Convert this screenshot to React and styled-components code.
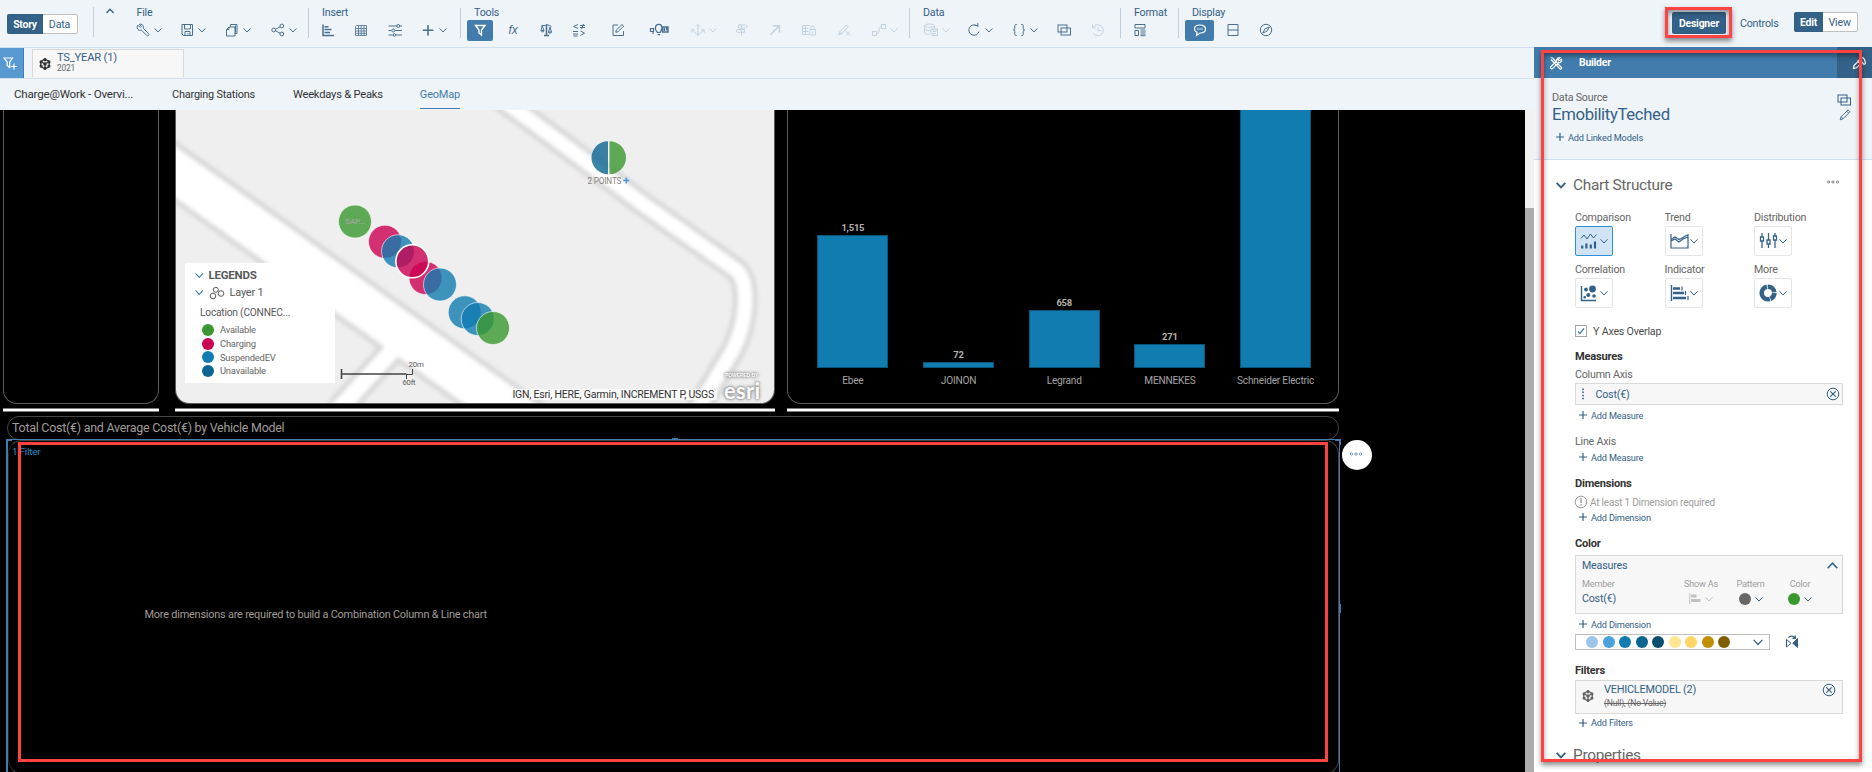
import React from "react";
import styled, { createGlobalStyle, css } from "styled-components";

const GlobalStyle = createGlobalStyle`
  * { box-sizing: border-box; letter-spacing: -0.02em; }
  body {
    margin: 0;
    background: #eff4f9;
    font-family: Roboto, "Liberation Sans", sans-serif;
    overflow: hidden;
  }
`;

const c = {
  ink: "#346187",
  blue: "#427cac",
  pale: "#eff4f9",
  line: "#d1dfee",
  grey: "#666666",
  red: "#ff4343",
  bar: "#117cb0",
};

/* ---------- page frame ---------- */
const Page = styled.div`
  position: relative;
  width: 1872px;
  height: 772px;
  display: flex;
  flex-direction: column;
  overflow: hidden;
  background: ${c.pale};
  white-space: nowrap;
`;
const Body = styled.div`
  flex: 1;
  min-height: 0;
  display: flex;
`;
const Main = styled.div`
  width: 1534px;
  display: flex;
  flex-direction: column;
  border-top: 1px solid ${c.line};
`;

/* ---------- icons ---------- */
const Svg = styled.svg`
  display: block;
  flex: none;
  fill: none;
  stroke: currentColor;
  stroke-width: 1;
  overflow: visible;
`;
const shapes = {
  wrench: <><path d="M3 3.2 5.2 5.4 6.4 4.2 4.3 2.3a3 3 0 0 1 3.9 3.9l5.3 5.4a1.2 1.2 0 0 1-1.8 1.8L6.3 8.1A3 3 0 0 1 3 3.2Z" /></>,
  save: <><path d="M3 2.5h10.5v11H4.5L3 12Z" /><path d="M5.5 2.5v4.5h6V2.5M6 13.5v-4h5v4M9 11v1.5" /></>,
  copy: <><path d="M6.500 4.500v-2h6.500v9h-2M11.500 3.500v7" /><path d="M5 5h6v9H2.500V7.500ZM5 5v2.500H2.500" /></>,
  share: <><circle cx="3.7" cy="8" r="1.9" /><circle cx="11.8" cy="4" r="1.9" /><circle cx="11.8" cy="12" r="1.9" /><path d="M5.6 7.2 10 4.8M5.6 8.8 10 11.2" /></>,
  chart: <path d="M3 2.5v11h11M4.5 4.8h4M4.5 7.6h7M4.5 10.4h5.5" strokeWidth="1.5" />,
  table: <><path d="M3.5 3.5h10v10h-11V4.5ZM2.5 6.5h11M2.5 9h11M2.5 11.3h11M5.5 3.5v10M8.2 3.5v10M11 3.5v10" strokeWidth=".8" /></>,
  sliders: <><path d="M1.5 4h8M13 4h2M1.5 8.5h3M8 8.5h7M1.5 13h4M9 13h6" /><circle cx="11.2" cy="4" r="1.5" /><circle cx="6.3" cy="8.5" r="1.5" /><circle cx="7.3" cy="13" r="1.3" /></>,
  plus: <path d="M8 3v10.5M2.8 8.2h10.5" strokeWidth="1.6" />,
  funnel: <path d="M3.5 3.5h9.5L9.5 8v5L7 11V8Z" strokeWidth="1.4" />,
  funnelAdd: <><path d="M2 3h8.5L7.700 7v5.500L5.200 10.500V7Z" strokeWidth="1.200" /><path d="M12 8.500v6M9 11.500h6" strokeWidth="1.200" /></>,
  scale: <><path d="M8.500 2.500v11M6 13.500h5" strokeWidth="1.500" /><path d="M3.500 3.500h4L9 2.500l4.500 2M3 8.500 4.200 4 6 8.500ZM10.500 10 12 5l1.500 5ZM2.800 8.800c.5 1.500 3 1.500 3.500 0M10.200 10.200c.5 1.300 3 1.300 3.500 0" /></>,
  compare: <path d="M7 2.500 2.500 4.500 7 6.500M9 3.500h5M9 5.500h5M12.500 2l-2 5M2 9.500h5M2 12h5M2.500 14h4M9.500 9l4 2.200-4 2.200" />,
  edit: <><path d="M8 3H3v10.500h10.500V9" /><path d="M6.300 8 12 2.500l1.700 1.600L8 9.800 5.800 10.300Z" /></>,
  bulb: <><path d="M-.5 6.500h3v3h-3ZM2 9.500v2.500M6.500 10.500C4.500 8.500 4 7 4.500 5a3.300 3.300 0 0 1 6.500.5c0 2-1.300 3-1.800 5ZM6.600 12.700h2.600" strokeWidth="1.200" /><path d="M11.500 5h5.500v5h-5.500ZM13.300 6v3M15.500 5.500v3" strokeWidth="1.400" /></>,
  branch: <path d="M8 13.500V2.500M6 4.500l2-2 2 2M8 13.500 2 8M1.800 10.800V7.800h3M8 13.500 14 8M14.200 10.800V7.800h-3" />,
  sign: <path d="M7.500 14V2M4.500 3h7l2 1.500-2 1.500h-7ZM10.500 7.500h-7L2 9l1.500 1.300h7Z" />,
  arrow: <path d="M3.500 12.500 12 4M5.500 3.700h7v7" strokeWidth="1.600" />,
  lockTable: <><path d="M8 12.500H1.500v-9h8M1.500 6.500h6M1.500 9.500h6M4.500 3.500v9" /><path d="M9 7.500h5.500v5.500H9ZM10 7.500V5.500a1.800 1.800 0 0 1 3.500 0v2M11.700 9.500v2" /></>,
  clearEdit: <><path d="M2.500 13 4 9.500 10.500 3l1.800 1.600L6 11.500ZM3.500 10l2 1.500" /><path d="M10 9.500l4 4M14 9.500l-4 4" /></>,
  link: <><rect x="1.500" y="9.500" width="4" height="4" /><rect x="10.500" y="2.500" width="4" height="4" /><path d="M5.500 11.500C8 11.500 8 10 8 8s0-3.500 2.500-3.500" /></>,
  database: <><ellipse cx="6.500" cy="3.700" rx="5" ry="1.700" /><path d="M1.500 3.700v7c0 1 2 1.800 4.500 1.800M1.500 7c1 1.500 4 1.700 6 1.500M11.500 3.700v2.500" /><path d="M8 7h6.500v6.500H9L8 12.500ZM10 7v2.500h3V7M10 13.500v-2h3" /></>,
  refresh: <path d="M11 3.800A5.200 5.200 0 1 0 13 9.500M8.500 3.500h3.300V1M11.800 3.500v1.500" />,
  braces: <path d="M5.800 2.500H5c-1 0-1.200.5-1.200 1.200v2.600C3.800 7.500 3.300 8 2.300 8c1 0 1.500.5 1.500 1.700v2.600c0 .7.2 1.200 1.200 1.200h.8M10.200 2.500h.8c1 0 1.200.5 1.200 1.200v2.600c0 1.200.5 1.700 1.500 1.700-1 0-1.500.5-1.500 1.700v2.600c0 .7-.2 1.200-1.200 1.200h-.8" />,
  linked: <><rect x="2" y="3" width="9" height="7" /><rect x="5" y="6" width="9.500" height="7" /></>,
  history: <><path d="M3 5.500A5.500 5.500 0 1 1 3 11M2.500 2.500v3.300h3.300M8 5v3.500h3" /></>,
  format: <path d="M3 2.500h10v3.500H3ZM3 8.500h3.500v5H3ZM8.500 8h5M8.500 10h5M8.500 12h5M8.500 13.700h5" />,
  comment: <><path d="M8 3C4.500 3 2.500 4.800 2.500 7c0 1.600 1 2.800 2.500 3.400L4.500 13.500 8 11c3.500 0 5.500-1.800 5.500-4S11.500 3 8 3Z" strokeWidth="1.200" /><path d="M5.300 7h1M7.500 7h1M9.700 7h1" strokeWidth="1.600" /></>,
  rows: <path d="M3 2.500h10v11H3ZM3 8h10" />,
  compass: <><circle cx="8" cy="8" r="5.700" /><path d="M4.800 11 7 6.800 11.300 5 9 9.200Z" /></>,
  tools: <><path d="m4.500 3 9 9.500c.6 1-.6 2-1.500 1.300L3 4.500M2.500 2.500 5 3M12 2.500l-2 2 1 1.300 2.500-1.500c.6 2-1 4-3 3.300l-6 6c-1 .7-2.500-.7-1.800-1.700l6-6c-.5-1.900 1.200-3.500 3.300-3.400Z" strokeWidth="1.200" /></>,
  brush: <path d="m1.500 13.500.5-3L6 6.500l2.500 2.300-4 4ZM5.500 5.500l4.500 4.500M6.500 5.500 9 3c2-1.500 4 1 4.500 5.500L12 9.500 9.500 6.500" strokeWidth="1.200" />,
  pencil: <path d="M2.500 13.500 3.500 10 11.500 2.300l2.200 2L5.800 12.300ZM10 3.800l2.200 2M3.600 10l2.200 2.300" />,
  cube: <><path d="M8 3 12.300 5.500v5L8 13 3.700 10.500v-5ZM8 8v5M8 8l4.300-2.500M8 8 3.700 5.500" strokeWidth="1.100" /><g fill="currentColor" stroke="none"><circle cx="8" cy="3.700" r="1.700" /><circle cx="11.900" cy="5.900" r="1.600" /><circle cx="11.900" cy="10.100" r="1.600" /><circle cx="8" cy="12.300" r="1.700" /><circle cx="4.100" cy="10.100" r="1.600" /><circle cx="4.100" cy="5.900" r="1.600" /><circle cx="8" cy="8" r="1.800" /></g></>,
  close: <><circle cx="8" cy="8" r="5.800" /><path d="m5.300 5.300 5.400 5.400M10.700 5.300l-5.400 5.400" strokeWidth="1.200" /></>,
  alert: <><circle cx="8" cy="8" r="5.800" /><path d="M8 4.300v4.700M8 10.300v1.500" strokeWidth="1.400" /></>,
  dots: <><circle cx="2" cy="8" r="1.500" /><circle cx="8" cy="8" r="1.500" /><circle cx="14" cy="8" r="1.500" /></>,
  flip: <><path d="M2.500 5.500v7.500L7 9.300Z" /><path d="M13.500 4.500v9L8.800 9.300Z" fill="currentColor" /><path d="M4.500 3.500c2-2 5-2 6.500.5M11.300 1.500V4.300H8.500" strokeWidth="1.200" /></>,
  nodes: <><circle cx="4" cy="11" r="2.800" /><circle cx="6.800" cy="4.800" r="2.500" /><circle cx="12" cy="8.500" r="2.800" /></>,
};
const Icon = ({ name, size = 16 }) => (
  <Svg width={size} height={size} viewBox="0 0 16 16">{shapes[name]}</Svg>
);
const Chevron = ({ up, size = 8, weight = 1 }) => (
  <Svg width={size} height={size} viewBox="0 0 8 8" style={{ strokeWidth: weight }}>
    <path d={up ? "M.5 6 4 2.300 7.500 6" : "M.5 2.300 4 6l3.500-3.700"} />
  </Svg>
);

/* ---------- toolbar ---------- */
const Toolbar = styled.header`
  height: 47px;
  flex: none;
  display: flex;
  color: ${c.ink};
  font-size: 10.7px;
`;
const Switch = styled.div`
  display: flex;
  width: ${(p) => p.$w}px;
  height: 20px;
  margin: ${(p) => p.$m};
  background: #fff;
  border: 1px solid #bfbfbf;
  border-radius: 2px;
`;
const SwitchItem = styled.div`
  display: grid;
  place-items: center;
  margin: -1px 0 -1px -1px;
  width: ${(p) => p.$w}px;
  border-radius: 2px 0 0 2px;
  ${(p) => p.$on && css`
    background: ${c.ink};
    color: #fff;
    font-weight: 700;
    font-size: 10.4px;
  `}
`;
const Divider = styled.div`
  width: 1px;
  height: 30px;
  margin-top: ${(p) => p.$top || 8}px;
  background: #c5ced8;
`;
const Collapse = styled.div`
  width: 32px;
  padding: 7px 0 0 12px;
`;
const Group = styled.div`
  width: ${(p) => p.$w}px;
  padding: 6px 0 0 ${(p) => p.$pl}px;
`;
const GroupLabel = styled.div`
  height: 14px;
  line-height: 13px;
  padding-left: ${(p) => p.$indent}px;
`;
const ToolRow = styled.div`
  display: flex;
  align-items: center;
  height: 21px;
`;
const Tool = styled.div`
  display: flex;
  align-items: center;
  gap: 3px;
  margin: 0 0 2px ${(p) => p.$gap}px;
  color: ${(p) => (p.$off ? "#c3d2df" : "#4a6f90")};
`;
const ToolButton = styled.div`
  width: ${(p) => p.$w}px;
  height: 21px;
  padding-bottom: 1px;
  display: grid;
  place-items: center;
  border-radius: 2px;
  background: ${c.blue};
  color: #fff;
`;
const Formula = styled.span`
  width: 16px;
  text-align: center;
  font: italic 12px "Liberation Sans", sans-serif;
`;
const groups = [
  { label: "File", w: 182, pl: 9, indent: 1.5, tools: [["wrench", 0, 1], ["save", 17, 1], ["copy", 18, 1], ["share", 19, 1]] },
  { label: "Insert", w: 151, pl: 11, indent: 2, tools: [["chart", 0], ["table", 17], ["sliders", 18], ["plus", 17, 1]] },
  { label: "Tools", w: 448, pl: 6, indent: 7, active: ["funnel", 26], tools: [["fx", 12], ["scale", 17], ["compare", 17], ["edit", 23], ["bulb", 25], ["branch", 23, 1, 1], ["sign", 17, 0, 1], ["arrow", 17, 0, 1], ["lockTable", 18, 0, 1], ["clearEdit", 19, 0, 1], ["link", 19, 1, 1]] },
  { label: "Data", w: 210, pl: 13, indent: 0, tools: [["database", 0, 1, 1], ["refresh", 16, 1], ["braces", 18, 1], ["linked", 18], ["history", 18, 0, 1]] },
  { label: "Format", w: 57, pl: 11, indent: 2, tools: [["format", 0]] },
  { label: "Display", w: 486, pl: 6, indent: 7, active: ["comment", 29], tools: [["rows", 11], ["compass", 17]] },
];
const DesignerButton = styled.div`
  width: 54px;
  height: 22px;
  margin: 12px 14px 0 7px;
  display: grid;
  place-items: center;
  border-radius: 2px;
  background: ${c.ink};
  color: #fff;
  font-weight: 700;
  font-size: 10.4px;
`;
const Controls = styled.div`
  width: 54px;
  line-height: 47px;
`;

const TopBar = () => (
  <Toolbar>
    <Switch $w={71} $m="14px 15px 0 7px">
      <SwitchItem $w={37} $on>Story</SwitchItem>
      <SwitchItem $w={36}>Data</SwitchItem>
    </Switch>
    <Divider $top={7} />
    <Collapse><Chevron up weight={1.3} /></Collapse>
    {groups.map((g, i) => (
      <React.Fragment key={g.label}>
        {i > 0 && <Divider />}
        <Group $w={g.w} $pl={g.pl}>
          <GroupLabel $indent={g.indent}>{g.label}</GroupLabel>
          <ToolRow>
            {g.active && <ToolButton $w={g.active[1]}><Icon name={g.active[0]} /></ToolButton>}
            {g.tools.map(([name, gap, menu, off]) => (
              <Tool key={name} $gap={gap} $off={off}>
                {name === "fx" ? <Formula>fx</Formula> : <Icon name={name} />}
                {menu ? <Chevron /> : null}
              </Tool>
            ))}
          </ToolRow>
        </Group>
      </React.Fragment>
    ))}
    <DesignerButton>Designer</DesignerButton>
    <Controls>Controls</Controls>
    <Switch $w={64} $m="12px 0 0 0">
      <SwitchItem $w={31} $on>Edit</SwitchItem>
      <SwitchItem $w={37}>View</SwitchItem>
    </Switch>
  </Toolbar>
);

/* ---------- filter bar and tabs ---------- */
const FilterBar = styled.div`
  display: flex;
  height: 31px;
  flex: none;
  border-bottom: 1px solid ${c.line};
`;
const AddFilter = styled.div`
  width: 24px;
  padding-right: 4px;
  display: grid;
  place-items: center;
  background: #5899d2;
  border-right: 1px solid #427cac;
  color: #fff;
`;
const FilterChip = styled.div`
  display: flex;
  align-items: center;
  gap: 4px;
  width: 152px;
  margin: 1px 0 1px 8px;
  padding-left: 4px;
  background: #f7f7f7;
  border: 1px solid #d9d9d9;
  border-bottom: 0;
  color: #333;
`;
const ChipText = styled.div`
  line-height: 10px;
  padding-bottom: 1px;
  font-size: 11.200px;
  color: ${c.ink};
`;
const ChipSub = styled.div`
  font-size: 8.300px;
  line-height: 10px;
  color: ${c.grey};
`;
const Tabs = styled.nav`
  display: flex;
  flex: none;
  height: 31px;
  padding-left: 14px;
`;
const Tab = styled.div`
  height: 30px;
  line-height: 31px;
  margin-right: ${(p) => p.$mr}px;
  font-size: ${(p) => p.$size}px;
  color: ${(p) => (p.$on ? c.blue : "#333")};
  border-bottom: 1px solid ${(p) => (p.$on ? c.blue : "transparent")};
`;

/* ---------- story canvas ---------- */
const Stage = styled.div`
  flex: 1;
  min-height: 0;
  display: flex;
`;
const Canvas = styled.div`
  width: 1525px;
  background: #000;
  overflow: hidden;
`;
const Scrollbar = styled.div`
  width: 9px;
  background: #f1f1f1;
  padding-top: 98px;
`;
const Thumb = styled.div`
  height: 100%;
  background: #adadad;
`;
const Cards = styled.div`
  display: flex;
  padding-left: 3px;
`;
const CardColumn = styled.div`
  width: ${(p) => p.$w}px;
  margin-right: ${(p) => p.$mr || 0}px;
`;
const Card = styled.div`
  position: relative;
  height: 294px;
  overflow: hidden;
  border: 1px solid #5a5a5a;
  border-top: 0;
  border-radius: 0 0 14px 14px;
`;
const Rule = styled.div`
  height: 4px;
  margin-top: 4px;
  background: #fff;
  border: solid #7d7d7d;
  border-width: 1px 0;
`;
const MapArt = styled.svg`
  display: block;
`;
const Legend = styled.div`
  position: absolute;
  left: 9px;
  top: 153px;
  width: 150px;
  height: 120px;
  padding: 3px 0 0 10px;
  background: #fff;
  border-radius: 1px;
  color: #58595b;
`;
const LegendHead = styled.div`
  display: flex;
  align-items: center;
  gap: 5px;
  height: ${(p) => (p.$bold ? 18 : 17)}px;
  margin-bottom: ${(p) => (p.$bold ? 0 : 1)}px;
  font-size: ${(p) => (p.$bold ? 11.500 : 11)}px;
  font-weight: ${(p) => (p.$bold ? 700 : 400)};
  svg:first-child { color: #427cac; }
`;
const LegendTitle = styled.div`
  padding: 4px 0 0 5px;
  height: 21px;
  line-height: 14px;
  font-size: 10.200px;
`;
const LegendItem = styled.div`
  display: flex;
  align-items: center;
  height: 13.700px;
  padding-left: 7px;
  gap: 6px;
  font-size: 9.350px;
  color: ${c.grey};
`;
const Dot = styled.span`
  width: 12px;
  height: 12px;
  flex: none;
  border-radius: 50%;
  background: ${(p) => p.$c};
`;
const Attribution = styled.div`
  position: absolute;
  right: 57px;
  bottom: 3px;
  height: 11px;
  padding: 0 3px;
  background: rgba(255, 255, 255, 0.7);
  font-size: 10.500px;
  line-height: 12px;
  color: #333;
`;
const Esri = styled.div`
  position: absolute;
  right: 5px;
  bottom: 3px;
  width: 45px;
  color: #fff;
  text-shadow: 0 0 2px #888, 0 0 3px #888, 0 0 4px #aaa;
`;
const PoweredBy = styled.div`
  font: 700 5px/6px "Liberation Sans", sans-serif;
  padding-left: 1px;
`;
const EsriWord = styled.div`
  margin-top: -1px;
  font: 700 22px/27px Lato, sans-serif;
  letter-spacing: 0.3px;
  margin-bottom: -4px;
`;

const col = { g: "#38972e", p: "#cb0050", b: "#117cb0" };
const markers = [
  [355, 221.500, "g"], [385, 241.700, "p"], [398, 251.300, "b"], [425.500, 278, "p"],
  [440, 284.500, "b"], [412.300, 261.300, "p"], [464.700, 312.300, "b"], [477.700, 319, "b"], [493, 328, "g"],
];
const roads = [
  ["M160 161 600 475", 42],
  ["M402 340 338 410", 17],
  ["M500 98 553 137 647 207 735 269Q747 278 745 307 743 330 733 350L697 410", 15],
];
const MapCard = () => (
  <Card>
    <MapArt width="599" height="293" viewBox="176 110 599 293">
      <defs><filter id="soft" x="-10%" y="-10%" width="120%" height="120%"><feGaussianBlur stdDeviation="2" /></filter></defs>
      <rect x="176" y="110" width="599" height="293" fill="#efefef" />
      <g fill="none" filter="url(#soft)">
        {roads.map(([d, w]) => <path key={d} d={d} stroke="#d3d3d3" strokeWidth={w + 9} />)}
        {roads.map(([d, w]) => <path key={d} d={d} stroke="#fff" strokeWidth={w} />)}
      </g>
      {markers.map(([x, y, k], i) => (
        <circle key={i} cx={x} cy={y} r="16.500" fill={col[k]} fillOpacity=".8" stroke="#fff" strokeOpacity={i === 5 ? 1 : 0.6} strokeWidth={i === 5 ? 1.600 : 1} />
      ))}
      <text x="355" y="223.500" fontSize="8" fontWeight="700" textAnchor="middle" fill="#9aa893">SAP...</text>
      <path d="M608 141.200a16.500 16.500 0 0 0 0 33Z" fill="#0b6591" fillOpacity=".8" />
      <path d="M609.500 141.200a16.500 16.500 0 0 1 0 33Z" fill="#38972e" fillOpacity=".8" />
      <text x="587.500" y="183.500" fontSize="8.200" fill="#8b8280">2 POINTS</text>
      <path d="M626.300 177.500v6M623.300 180.500h6" stroke="#3f97dd" strokeWidth="1.500" />
      <path d="M341.500 369v10M341.500 374h65" stroke="#444" strokeWidth="1.600" fill="none" />
      <path d="M406.500 374v5M406.500 374.500h6v-5.500" stroke="#444" fill="none" />
      <text x="408.500" y="367" fontSize="7.800" fill="#58595b">20m</text>
      <text x="402.500" y="385" fontSize="7.500" fill="#58595b">60ft</text>
    </MapArt>
    <Legend>
      <LegendHead $bold><Chevron size={8.500} />LEGENDS</LegendHead>
      <LegendHead><Chevron size={8.500} /><Icon name="nodes" />Layer 1</LegendHead>
      <LegendTitle>Location (CONNEC...</LegendTitle>
      {[["Available", "#38972e"], ["Charging", "#cb0050"], ["SuspendedEV", "#117cb0"], ["Unavailable", "#0b6591"]].map(([t, k]) => (
        <LegendItem key={t}><Dot $c={k} />{t}</LegendItem>
      ))}
    </Legend>
    <Attribution>IGN, Esri, HERE, Garmin, INCREMENT P, USGS</Attribution>
    <Esri><PoweredBy>POWERED BY</PoweredBy><EsriWord>esri</EsriWord></Esri>
  </Card>
);

const BarArea = styled.div`
  display: flex;
  align-items: flex-end;
  height: 100%;
  padding: 0 0 15px 12px;
`;
const BarCell = styled.div`
  width: 105.700px;
  flex: none;
  display: flex;
  flex-direction: column;
  align-items: center;
  font-size: 10.150px;
  line-height: 14px;
  color: #a3a3a3;
`;
const BarValue = styled.div`
  font-size: 9.400px;
  font-weight: 700;
  color: #b5b1ae;
`;
const Bar = styled.div`
  width: 71px;
  margin-bottom: 6px;
  background: ${c.bar};
  border: 1px solid #0b5377;
`;
const bars = [["Ebee", "1,515", 133], ["JOINON", "72", 6], ["Legrand", "658", 58], ["MENNEKES", "271", 24], ["Schneider Electric", "", 260]];

const TitleBox = styled.div`
  width: 1332px;
  height: 24px;
  margin: 4px 0 0 7px;
  padding-left: 4px;
  line-height: 22px;
  border: 1px solid #454545;
  border-radius: 12px;
  font-size: 12.450px;
  color: #a09c98;
`;
const Selection = styled.div`
  position: relative;
  width: 1334px;
  height: 340px;
  margin: -1px 0 0 6px;
  border: 1px solid ${c.blue};
  border-left-width: 2px;
`;
const ChartCard = styled.div`
  height: 334px;
  border: 1px solid #454545;
  border-radius: 14px;
  border-left-color: #222;
`;
const FilterCount = styled.div`
  padding: 4px 0 0 3px;
  font-size: 9.900px;
  line-height: 14px;
  color: #2f8ccf;
`;
const Message = styled.div`
  padding: 149px 0 0 135.500px;
  font-size: 10.930px;
  line-height: 14px;
  color: #a09c98;
`;
const Handle = styled.span`
  position: absolute;
  background: ${c.blue};
  right: ${(p) => p.$r ?? "auto"}px;
  top: ${(p) => p.$t}px;
  left: ${(p) => (p.$l === undefined ? "auto" : `${p.$l}px`)};
  width: ${(p) => p.$w}px;
  height: ${(p) => p.$h}px;
`;
const MoreButton = styled.div`
  position: absolute;
  left: 1334px;
  top: 0;
  width: 30px;
  height: 30px;
  padding: 0 2px 2px 0;
  border-radius: 50%;
  display: grid;
  place-items: center;
  background: #fff;
  color: ${c.blue};
`;

/* ---------- builder panel ---------- */
const Panel = styled.aside`
  width: 338px;
  background: #fff;
  color: ${c.ink};
  font-size: 10.700px;
  overflow: hidden;
`;
const PanelHead = styled.div`
  height: 31px;
  display: flex;
  align-items: center;
  background: ${c.blue};
  color: #fff;
  font-weight: 700;
  font-size: 10.400px;
  padding-left: 14px;
`;
const HeadTitle = styled.div`
  margin-left: 15px;
  flex: 1;
`;
const StyleTab = styled.div`
  width: 35px;
  height: 31px;
  display: flex;
  align-items: center;
  padding-left: 15px;
  background: ${c.ink};
`;
const Source = styled.div`
  height: 82px;
  display: flex;
  justify-content: space-between;
  padding: 12px 20px 0 18px;
  background: ${c.pale};
  border-bottom: 1px solid ${c.line};
`;
const SourceIcons = styled.div`
  display: flex;
  flex-direction: column;
  align-items: flex-end;
  padding-top: 2px;
`;
const SourceName = styled.div`
  font-size: 16.700px;
  line-height: 20px;
  margin-bottom: 7px;
`;
const Label = styled.div`
  line-height: 15px;
  color: ${c.grey};
`;
const Section = styled.div`
  display: flex;
  align-items: center;
  height: ${(p) => p.$h}px;
  margin-top: ${(p) => p.$mt || 0}px;
  padding: ${(p) => p.$pt || 0}px 0 0 22px;
  gap: 7px;
  font-size: 15.400px;
  color: ${c.grey};
  svg:first-child { color: ${c.ink}; }
`;
const SectionMenu = styled.span`
  margin: -5px 33px 0 auto;
  && svg { color: ${c.grey}; }
`;
const Fields = styled.div`
  padding: 0 29px 0 41px;
`;
const ChartTypes = styled.div`
  display: grid;
  grid-template-columns: repeat(3, 89.500px);
  row-gap: 4px;
`;
const TypeLabel = styled.div`
  height: 18px;
  line-height: 20px;
  color: ${c.grey};
`;
const TypeButton = styled.div`
  width: 38px;
  height: 30px;
  display: flex;
  align-items: center;
  justify-content: center;
  gap: 2px;
  border: 1px solid ${(p) => (p.$on ? "#2f8fd8" : "#e5e5e5")};
  border-radius: 2px;
  background: ${(p) => (p.$on ? "#d1e4f6" : "#fff")};
`;
const Row = styled.div`
  display: flex;
  align-items: center;
  height: ${(p) => p.$h}px;
  margin-top: ${(p) => p.$mt || 0}px;
  gap: ${(p) => p.$gap ?? 5}px;
  color: ${(p) => p.$c || c.grey};
`;
const Heading = styled(Row)`
  font-weight: 700;
  font-size: 11.100px;
  color: #333;
`;
const AddRow = styled(Row)`
  padding: 0 0 2px 4px;
  gap: 4px;
  font-size: 9.200px;
  color: ${c.ink};
`;
const Hint = styled(Row)`
  font-size: 10px;
  color: #9d9d9d;
  gap: 1px;
  margin-left: -2px;
`;
const Check = styled.span`
  width: 12px;
  height: 12px;
  display: grid;
  place-items: center;
  border: 1px solid #a6a6a6;
  color: ${c.blue};
`;
const Box = styled.div`
  height: ${(p) => p.$h}px;
  margin-top: ${(p) => p.$mt || 0}px;
  background: #f7f7f7;
  border: 1px solid #d9d9d9;
`;
const BoxRow = styled.div`
  display: flex;
  align-items: center;
  height: ${(p) => p.$h || 20}px;
  padding: 0 ${(p) => p.$pr ?? 1}px 0 6px;
`;
const Grow = styled.span`
  flex: 1;
  padding-left: ${(p) => p.$pl || 0}px;
`;
const MemberGrid = styled.div`
  display: grid;
  grid-template-columns: 94px 50px 49px 50px;
  padding: 2px 0 0 6px;
`;
const Cell = styled.div`
  display: flex;
  align-items: center;
  justify-content: ${(p) => (p.$left ? "flex-start" : "center")};
  gap: 4px;
  height: 15px;
  color: ${(p) => (p.$c ? p.$c : c.ink)};
  font-size: ${(p) => (p.$small ? 9.100 : 10.700)}px;
`;
const Palette = styled.div`
  display: flex;
  align-items: center;
  gap: 4.500px;
  width: 195px;
  height: 16px;
  padding: 0 6px 0 10px;
  border: 1px solid #bfbfbf;
  color: ${c.ink};
  svg { margin-left: auto; }
`;
const FilterBox = styled(Box)`
  display: flex;
  padding: 0 5px 0 4px;
`;
const FilterIcon = styled.div`
  padding-top: 7px;
  color: ${c.grey};
`;
const FilterText = styled.div`
  flex: 1;
  padding: 2px 0 0 8px;
  font-size: 10.900px;
  line-height: 14px;
`;
const Struck = styled.div`
  font-size: 8.600px;
  line-height: 13px;
  color: ${c.grey};
  text-decoration: line-through;
`;
const FilterClose = styled.div`
  padding-top: 1px;
`;

const typeArt = {
  combo: <><path d="M1 6.500 4 3l3 4 3.500-5 3 4 3-3.500" /><path d="M2.200 16.500v-3M6.400 16.500v-5M10.800 16.500v-4M15 16.500V9.500" strokeWidth="2.200" /></>,
  trend: <path d="M1 2v14h17V2M1 7.500l4-2.500 4 2.500 4-2 5-3M1 9l4-2 4 3 4-3 5-2" strokeWidth="1.200" />,
  dist: <path d="M3 1v4M3 9v7M9.500 1v7M9.500 12v4M16 1v3M16 8v8M1.500 5h3v4h-3ZM8 8h3v4H8ZM14.500 4h3v4h-3Z" strokeWidth="1.300" />,
  corr: <><path d="M1.500 2v14.500H16" strokeWidth="1.400" /><g fill="currentColor" stroke="none"><circle cx="12.500" cy="5" r="3.400" /><circle cx="6" cy="5.500" r="1.900" /><circle cx="8.300" cy="11" r="2" /><circle cx="14" cy="12" r="1.800" /><circle cx="4.700" cy="13.300" r="1.300" /></g></>,
  ind: <><path d="M1.500 1v16" strokeWidth="1.400" /><path d="M3 4.500h7M3 9h11M3 14h13" strokeWidth="2.600" /><path d="M12 2.500v4M15.500 7v4M18 12v4" strokeWidth="1.200" /></>,
  more: <circle cx="9" cy="9" r="6.300" strokeWidth="4.600" strokeDasharray="8.800 .900 7 .700 20 .900" transform="rotate(-90 9 9)" />,
};
const types = [["Comparison", "combo"], ["Trend", "trend"], ["Distribution", "dist"], ["Correlation", "corr"], ["Indicator", "ind"], ["More", "more"]];
const swatches = ["#9dc6ea", "#4ba1da", "#117cb0", "#0b6591", "#0a4e6e", "#ffe693", "#fdd663", "#c09000", "#7f6000"];

const Add = ({ h, mt, children }) => (
  <AddRow $h={h} $mt={mt}>
    <Svg width="8" height="8" viewBox="0 0 8 8"><path d="M4 0v8M0 4h8" strokeWidth="1.200" /></Svg>
    {children}
  </AddRow>
);

const Builder = () => (
  <Panel>
    <PanelHead>
      <Icon name="tools" />
      <HeadTitle>Builder</HeadTitle>
      <StyleTab><Icon name="brush" /></StyleTab>
    </PanelHead>
    <Source>
      <div>
        <Label>Data Source</Label>
        <SourceName>EmobilityTeched</SourceName>
        <Add h={12}>Add Linked Models</Add>
      </div>
      <SourceIcons><Icon name="linked" /><Icon name="pencil" size={14} /></SourceIcons>
    </Source>
    <Section $h={48} $pt={1}>
      <Chevron size={10} weight={1.500} />Chart Structure
      <SectionMenu><Icon name="dots" size={12} /></SectionMenu>
    </Section>
    <Fields>
      <ChartTypes>
        {types.map(([t, k], i) => (
          <div key={t}>
            <TypeLabel>{t}</TypeLabel>
            <TypeButton $on={i === 0}>
              <Svg width="18" height="18" viewBox="0 0 18 18">{typeArt[k]}</Svg>
              <Chevron />
            </TypeButton>
          </div>
        ))}
      </ChartTypes>
      <Row $mt={13} $h={20} $gap={6} $c="#4d4d4d">
        <Check><Svg width="8" height="8" viewBox="0 0 8 8"><path d="m1 4.500 2 2L7 1.300" strokeWidth="1.300" /></Svg></Check>Y Axes Overlap
      </Row>
      <Heading $mt={6} $h={18}>Measures</Heading>
      <Row $h={18}>Column Axis</Row>
      <Box $h={22}>
        <BoxRow>
          <Svg width="2" height="12" viewBox="0 0 2 12"><path d="M1 .5v11" strokeWidth="1.600" strokeDasharray="1.500 1.600" /></Svg>
          <Grow $pl={11.500}>Cost(€)</Grow>
          <Icon name="close" />
        </BoxRow>
      </Box>
      <Add h={22}>Add Measure</Add>
      <Row $mt={5} $h={18}>Line Axis</Row>
      <Add h={16}>Add Measure</Add>
      <Heading $mt={8} $h={18}>Dimensions</Heading>
      <Hint $h={20}><Icon name="alert" />At least 1 Dimension required</Hint>
      <Add h={12}>Add Dimension</Add>
      <Heading $mt={10} $h={18}>Color</Heading>
      <Box $mt={3} $h={59}>
        <BoxRow $pr={4} $h={18}><Grow>Measures</Grow><Chevron up size={11} weight={1.100} /></BoxRow>
        <MemberGrid>
          <Cell $left $small $c="#9d9d9d">Member</Cell>
          <Cell $small $c="#9d9d9d">Show As</Cell>
          <Cell $small $c="#9d9d9d">Pattern</Cell>
          <Cell $small $c="#9d9d9d">Color</Cell>
          <Cell $left>Cost(€)</Cell>
          <Cell $c="#c2c2c2"><Svg width="12" height="11" viewBox="0 0 12 11"><path d="M.7 0v11" /><path d="M2 3h5.500M2 7.500h9.500" strokeWidth="3" /></Svg><Chevron /></Cell>
          <Cell><Dot $c="#666" /><Chevron /></Cell>
          <Cell><Dot $c="#38972e" /><Chevron /></Cell>
        </MemberGrid>
      </Box>
      <Add h={20} mt={1}>Add Dimension</Add>
      <Row $mt={-1} $h={16} $gap={14} $c={c.ink}>
        <Palette>
          {swatches.map((s) => <Dot key={s} $c={s} />)}
          <Chevron size={10} />
        </Palette>
        <Icon name="flip" />
      </Row>
      <Heading $mt={11} $h={18}>Filters</Heading>
      <FilterBox $mt={1} $h={34}>
        <FilterIcon><Icon name="cube" /></FilterIcon>
        <FilterText>VEHICLEMODEL (2)<Struck>(Null), (No Value)</Struck></FilterText>
        <FilterClose><Icon name="close" /></FilterClose>
      </FilterBox>
      <Add h={19}>Add Filters</Add>
    </Fields>
    <Section $mt={12} $h={20}><Chevron size={10} weight={1.500} />Properties</Section>
  </Panel>
);

/* ---------- callout frames laid over the page ---------- */
const Callout = styled.div`
  position: absolute;
  left: ${(p) => p.$x}px;
  top: ${(p) => p.$y}px;
  width: ${(p) => p.$w}px;
  height: ${(p) => p.$h}px;
  border: 3px solid ${c.red};
  box-shadow: ${(p) => (p.$flat ? "none" : "0 3px 5px rgba(0, 0, 0, 0.45), inset 0 3px 5px rgba(0, 0, 0, 0.4)")};
  pointer-events: none;
`;

export default function App() {
  return (
    <Page>
      <GlobalStyle />
      <TopBar />
      <Body>
        <Main>
          <FilterBar>
            <AddFilter><Icon name="funnelAdd" /></AddFilter>
            <FilterChip>
              <Icon name="cube" />
              <ChipText>TS_YEAR (1)<ChipSub>2021</ChipSub></ChipText>
            </FilterChip>
          </FilterBar>
          <Tabs>
            <Tab $size={11.650} $mr={39}>Charge@Work - Overvi...</Tab>
            <Tab $size={10.950} $mr={38}>Charging Stations</Tab>
            <Tab $size={11.200} $mr={37}>Weekdays &amp; Peaks</Tab>
            <Tab $size={11} $on>GeoMap</Tab>
          </Tabs>
          <Stage>
            <Canvas>
              <Cards>
                <CardColumn $w={156} $mr={16}><Card /><Rule /></CardColumn>
                <CardColumn $w={600} $mr={12}><MapCard /><Rule /></CardColumn>
                <CardColumn $w={552}>
                  <Card>
                    <BarArea>
                      {bars.map(([name, value, h]) => (
                        <BarCell key={name}>
                          <BarValue>{value}</BarValue>
                          <Bar style={{ height: h }} />
                          {name}
                        </BarCell>
                      ))}
                    </BarArea>
                  </Card>
                  <Rule />
                </CardColumn>
              </Cards>
              <TitleBox>Total Cost(€) and Average Cost(€) by Vehicle Model</TitleBox>
              <Selection>
                <ChartCard>
                  <FilterCount>1 Filter</FilterCount>
                  <Message>More dimensions are required to build a Combination Column &amp; Line chart</Message>
                </ChartCard>
                <Handle $l={0} $t={0} $w={4} $h={1} />
                <Handle $l={664} $t={-2} $w={6} $h={1} />
                <Handle $r={-2} $t={-1} $w={6} $h={2} />
                <Handle $r={-2} $t={-1} $w={2} $h={6} />
                <Handle $r={-2} $t={164} $w={2} $h={9} />
                <MoreButton><Icon name="dots" size={12} /></MoreButton>
              </Selection>
            </Canvas>
            <Scrollbar><Thumb /></Scrollbar>
          </Stage>
        </Main>
        <Builder />
      </Body>
      <Callout $x={1665} $y={7} $w={67} $h={31} />
      <Callout $x={1541} $y={50} $w={321} $h={712} />
      <Callout $flat $x={18} $y={442} $w={1310} $h={320} />
    </Page>
  );
}
